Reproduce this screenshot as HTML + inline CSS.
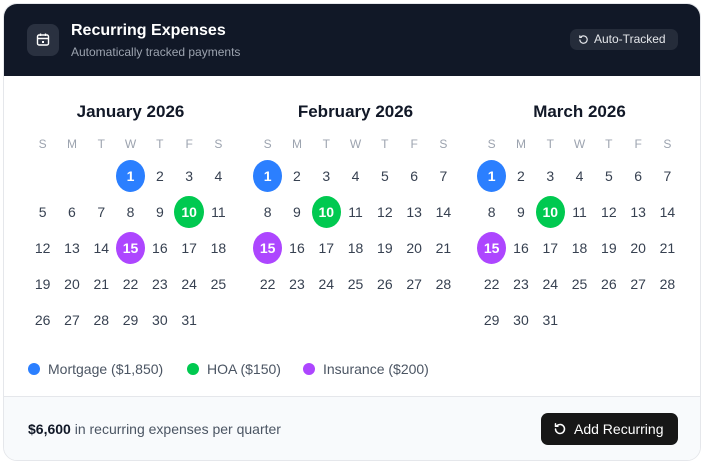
<!DOCTYPE html>
<html><head><meta charset="utf-8"><style>
*{margin:0;padding:0;box-sizing:border-box}
body{width:704px;height:464px;background:#fff;font-family:"Liberation Sans",sans-serif;position:relative;overflow:hidden}
.card{position:absolute;left:3px;top:3px;width:698px;height:458px;border:1px solid #e5e7eb;border-radius:14px;overflow:hidden;background:#fff}
.hdr{position:absolute;left:0;top:0;width:100%;height:72px;background:#111827}
.ico{position:absolute;left:23px;top:20px;width:32px;height:32px;border-radius:8px;background:#2a3140}
.t1{position:absolute;left:67px;top:18px;color:#fff;font-size:16px;font-weight:bold}
.t2{position:absolute;left:67px;top:41px;color:#9ca3af;font-size:12px}
.badge{position:absolute;left:566px;top:25px;height:21px;width:108px;border-radius:7px;background:#252c3a;color:#e5e7eb;font-size:12px;line-height:21px;padding-left:24px}
.badge svg{position:absolute;left:8px;top:5px}
.month{position:absolute;top:98px;width:205px}
.mt{text-align:center;font-size:17px;font-weight:bold;color:#111827;height:24px}
.g{display:grid;grid-template-columns:repeat(7,29.3px)}
.dh{height:28px;line-height:28px;text-align:center;font-size:12px;color:#9ca3af;margin-top:4px}
.d{height:36px;display:flex;align-items:center;justify-content:center;font-size:14px;color:#374151}
.d span{width:32px;height:32px;border-radius:50%;display:flex;align-items:center;justify-content:center;color:#fff;font-weight:bold}
.b{background:#2b7fff}.gr{background:#00c950}.p{background:#ad46ff}
.leg{position:absolute;top:357px;font-size:14px;color:#4b5563}
.leg i{display:inline-block;width:12px;height:12px;border-radius:50%;vertical-align:-1px;margin-right:8px}
.ftr{position:absolute;left:0;top:392px;width:100%;height:66px;background:#f8fafc;border-top:1px solid #e5e7eb}
.ft{position:absolute;left:24px;top:24px;font-size:14px;color:#4b5563}
.ft b{color:#111827}
.btn{position:absolute;left:537px;top:16px;width:137px;height:32px;border-radius:7px;background:#171717;color:#fff;font-size:14px;line-height:32px;padding-left:33px}
.btn svg{position:absolute;left:12px;top:9px}
</style></head><body>
<div class="card">
<div class="hdr">
<div class="ico"><svg width="32" height="32" viewBox="0 0 32 32"><g fill="none" stroke="#fff" stroke-width="1.4"><rect x="10.5" y="11" width="11" height="10" rx="1.5"/><line x1="10.5" y1="14.5" x2="21.5" y2="14.5"/><line x1="13.5" y1="9.5" x2="13.5" y2="12"/><line x1="18.5" y1="9.5" x2="18.5" y2="12"/><rect x="15" y="17" width="2" height="2" fill="#fff" stroke="none"/></g></svg></div>
<div class="t1">Recurring Expenses</div>
<div class="t2">Automatically tracked payments</div>
<div class="badge"><svg width="11" height="11" viewBox="0 0 12 12"><path d="M2 6a4 4 0 1 0 1.2-2.8M2 1.5v2.2h2.2" fill="none" stroke="#e5e7eb" stroke-width="1.3"/></svg>Auto-Tracked</div>
</div>

<div class="month" style="left:24px">
<div class="mt">January 2026</div>
<div class="g">
<div class="dh">S</div><div class="dh">M</div><div class="dh">T</div><div class="dh">W</div><div class="dh">T</div><div class="dh">F</div><div class="dh">S</div>
<div class="d"></div><div class="d"></div><div class="d"></div><div class="d"><span class="b">1</span></div><div class="d">2</div><div class="d">3</div><div class="d">4</div>
<div class="d">5</div><div class="d">6</div><div class="d">7</div><div class="d">8</div><div class="d">9</div><div class="d"><span class="gr">10</span></div><div class="d">11</div>
<div class="d">12</div><div class="d">13</div><div class="d">14</div><div class="d"><span class="p">15</span></div><div class="d">16</div><div class="d">17</div><div class="d">18</div>
<div class="d">19</div><div class="d">20</div><div class="d">21</div><div class="d">22</div><div class="d">23</div><div class="d">24</div><div class="d">25</div>
<div class="d">26</div><div class="d">27</div><div class="d">28</div><div class="d">29</div><div class="d">30</div><div class="d">31</div>
</div></div>

<div class="month" style="left:249px">
<div class="mt">February 2026</div>
<div class="g">
<div class="dh">S</div><div class="dh">M</div><div class="dh">T</div><div class="dh">W</div><div class="dh">T</div><div class="dh">F</div><div class="dh">S</div>
<div class="d"><span class="b">1</span></div><div class="d">2</div><div class="d">3</div><div class="d">4</div><div class="d">5</div><div class="d">6</div><div class="d">7</div>
<div class="d">8</div><div class="d">9</div><div class="d"><span class="gr">10</span></div><div class="d">11</div><div class="d">12</div><div class="d">13</div><div class="d">14</div>
<div class="d"><span class="p">15</span></div><div class="d">16</div><div class="d">17</div><div class="d">18</div><div class="d">19</div><div class="d">20</div><div class="d">21</div>
<div class="d">22</div><div class="d">23</div><div class="d">24</div><div class="d">25</div><div class="d">26</div><div class="d">27</div><div class="d">28</div>
</div></div>

<div class="month" style="left:473px">
<div class="mt">March 2026</div>
<div class="g">
<div class="dh">S</div><div class="dh">M</div><div class="dh">T</div><div class="dh">W</div><div class="dh">T</div><div class="dh">F</div><div class="dh">S</div>
<div class="d"><span class="b">1</span></div><div class="d">2</div><div class="d">3</div><div class="d">4</div><div class="d">5</div><div class="d">6</div><div class="d">7</div>
<div class="d">8</div><div class="d">9</div><div class="d"><span class="gr">10</span></div><div class="d">11</div><div class="d">12</div><div class="d">13</div><div class="d">14</div>
<div class="d"><span class="p">15</span></div><div class="d">16</div><div class="d">17</div><div class="d">18</div><div class="d">19</div><div class="d">20</div><div class="d">21</div>
<div class="d">22</div><div class="d">23</div><div class="d">24</div><div class="d">25</div><div class="d">26</div><div class="d">27</div><div class="d">28</div>
<div class="d">29</div><div class="d">30</div><div class="d">31</div>
</div></div>

<div class="leg" style="left:24px"><i class="b"></i>Mortgage ($1,850)</div>
<div class="leg" style="left:183px"><i class="gr"></i>HOA ($150)</div>
<div class="leg" style="left:299px"><i class="p"></i>Insurance ($200)</div>

<div class="ftr">
<div class="ft"><b>$6,600</b> in recurring expenses per quarter</div>
<div class="btn"><svg width="14" height="14" viewBox="0 0 14 14"><path d="M2.5 7a4.5 4.5 0 1 0 1.4-3.3M2.5 1.8v2.4h2.4" fill="none" stroke="#fff" stroke-width="1.5" stroke-linecap="round"/></svg>Add Recurring</div>
</div>
</div>
</body></html>
